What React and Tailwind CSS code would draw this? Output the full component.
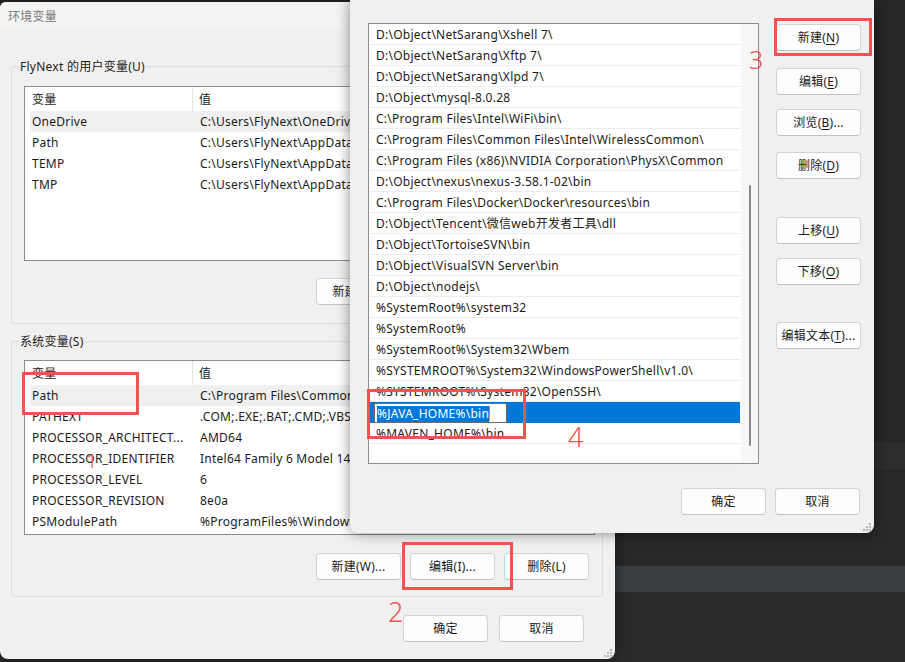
const userVars = [
  ['OneDrive', 'C:\\Users\\FlyNext\\OneDrive', true],
  ['Path', 'C:\\Users\\FlyNext\\AppData\\Local\\Microsoft\\WindowsApps;'],
  ['TEMP', 'C:\\Users\\FlyNext\\AppData\\Local\\Temp'],
  ['TMP', 'C:\\Users\\FlyNext\\AppData\\Local\\Temp'],
];

const sysVars = [
  ['Path', 'C:\\Program Files\\Common Files\\Oracle\\Java\\javapath;', true],
  ['PATHEXT', '.COM;.EXE;.BAT;.CMD;.VBS;.VBE;.JS;.JSE;.WSF;.WSH;.MSC'],
  ['PROCESSOR_ARCHITECT...', 'AMD64'],
  ['PROCESSOR_IDENTIFIER', 'Intel64 Family 6 Model 140 Stepping 1, GenuineIntel'],
  ['PROCESSOR_LEVEL', '6'],
  ['PROCESSOR_REVISION', '8e0a'],
  ['PSModulePath', '%ProgramFiles%\\WindowsPowerShell\\Modules;'],
];

const paths = [
  'D:\\Object\\NetSarang\\Xshell 7\\',
  'D:\\Object\\NetSarang\\Xftp 7\\',
  'D:\\Object\\NetSarang\\Xlpd 7\\',
  'D:\\Object\\mysql-8.0.28',
  'C:\\Program Files\\Intel\\WiFi\\bin\\',
  'C:\\Program Files\\Common Files\\Intel\\WirelessCommon\\',
  'C:\\Program Files (x86)\\NVIDIA Corporation\\PhysX\\Common',
  'D:\\Object\\nexus\\nexus-3.58.1-02\\bin',
  'C:\\Program Files\\Docker\\Docker\\resources\\bin',
  'D:\\Object\\Tencent\\微信web开发者工具\\dll',
  'D:\\Object\\TortoiseSVN\\bin',
  'D:\\Object\\VisualSVN Server\\bin',
  'D:\\Object\\nodejs\\',
  '%SystemRoot%\\system32',
  '%SystemRoot%',
  '%SystemRoot%\\System32\\Wbem',
  '%SYSTEMROOT%\\System32\\WindowsPowerShell\\v1.0\\',
  '%SYSTEMROOT%\\System32\\OpenSSH\\',
  'EDIT',
  '%MAVEN_HOME%\\bin',
  '',
];

function Btn({ children, className = '' }) {
  return (
    <div
      className={`flex h-[27px] w-[85px] shrink-0 items-center justify-center rounded-[4px] border border-[#d3d3d3] border-b-[#c2c2c2] bg-[#fdfdfd] text-[12px] text-[#1b1b1b] ${className}`}
    >
      {children}
    </div>
  );
}

function Grip() {
  return (
    <svg width="8" height="8" viewBox="0 0 8 8" className="absolute bottom-[2px] right-[3px]">
      {[[6, 0], [6, 3], [3, 3], [6, 6], [3, 6], [0, 6]].map(([x, y]) => (
        <rect key={`${x}-${y}`} x={x} y={y} width="2" height="2" fill="#b5b5b5" />
      ))}
    </svg>
  );
}

function VarList({ items, mt }) {
  return (
    <div className={`ml-[12px] h-[175px] w-[571px] overflow-hidden border border-[#8c8c8c] bg-white ${mt}`}>
      <div className="flex h-[24px] items-center">
        <div className="flex h-full w-[168px] items-center border-r border-[#e5e5e5] pl-[7px] pt-[1px]">变量</div>
        <div className="pl-[6px] pt-[1px]">值</div>
      </div>
      {items.map(([name, value, sel]) => (
        <div
          key={name}
          className={`ml-[5px] flex h-[21px] items-center whitespace-nowrap pt-[1px] ${sel ? 'bg-[#f0f0f0]' : ''}`}
        >
          <div className="w-[163px] shrink-0 pl-[2px]">{name}</div>
          <div className="pl-[7px]">{value}</div>
        </div>
      ))}
    </div>
  );
}

function LeftWindow() {
  return (
    <div className="absolute left-0 top-[2px] flex h-[657px] w-[615px] flex-col rounded-b-[8px] rounded-tl-[6px] bg-[#f0f0f0] text-[12px] text-[#1b1b1b] shadow-[0_0_14px_rgba(0,0,0,0.45)]">
      <div className="flex h-[28px] items-center rounded-tl-[6px] bg-[#f3f3f3] pl-[8px] pt-[2px] text-[#7a7a7a]">环境变量</div>

      <fieldset className="ml-[11px] mt-[28px] w-[592px] rounded-[3px] border border-[#dcdcdc] p-0 pb-[18px]">
        <legend className="ml-[7px] px-[1px] leading-[17px]">FlyNext 的用户变量(U)</legend>
        <VarList items={userVars} mt="mt-[11px]" />
        <div className="mt-[17px] flex justify-end gap-[9px] pr-[13px]">
          <Btn>新建(N)...</Btn>
          <Btn>编辑(E)...</Btn>
          <Btn>删除(D)</Btn>
        </div>
      </fieldset>

      <fieldset className="ml-[11px] mt-[9px] w-[592px] rounded-[3px] border border-[#dcdcdc] p-0 pb-[16px]">
        <legend className="ml-[7px] px-[1px] leading-[17px]">系统变量(S)</legend>
        <VarList items={sysVars} mt="mt-[10px]" />
        <div className="mt-[18px] flex justify-end gap-[9px] pr-[13px]">
          <Btn>新建(W)...</Btn>
          <Btn>编辑(I)...</Btn>
          <Btn>删除(L)</Btn>
        </div>
      </fieldset>

      <div className="mt-[18px] flex justify-end gap-[11px] pr-[31px]">
        <Btn>确定</Btn>
        <Btn>取消</Btn>
      </div>
      <Grip />
    </div>
  );
}

function PathList() {
  return (
    <div className="flex h-[441px] w-[391px] border border-[#8c8c8c] bg-white">
      <div className="ml-[1px] w-[371px]">
        {paths.map((p, i) =>
          p === 'EDIT' ? (
            <div key={i} className="flex h-[21px] items-start bg-[#0078d7] pl-[4px] pt-[1px]">
              <div className="flex h-[20px] w-[133px] items-center border border-[#6b6b6b] bg-white pl-[2px] pt-[1px]">
                <span className="bg-[#0078d7] leading-[16px] text-white">%JAVA_HOME%\bin</span>
                <span className="h-[15px] w-[1px] bg-[#e08a00]" />
              </div>
            </div>
          ) : (
            <div key={i} className="flex h-[21px] items-center whitespace-nowrap border-b border-[#ececec] pl-[6px] pt-[2px]">
              {p}
            </div>
          )
        )}
      </div>
      <div className="ml-[1px] flex w-[17px] justify-center bg-[#f7f7f7] pt-[161px]">
        <div className="h-[261px] w-[2px] rounded-full bg-[#8a8a8a]" />
      </div>
    </div>
  );
}

function u(ch) {
  return <span className="underline underline-offset-[2px]">{ch}</span>;
}

function EditDialog() {
  return (
    <div className="absolute left-[350px] top-0 flex h-[533px] w-[524px] flex-col rounded-b-[8px] bg-[#f0f0f0] text-[12px] text-[#1b1b1b] shadow-[0_0_14px_rgba(0,0,0,0.45)]">
      <div className="flex pl-[18px] pt-[23px]">
        <PathList />
        <div className="ml-[17px] flex flex-col">
          <Btn className="mt-[1px]">新建({u('N')})</Btn>
          <Btn className="mt-[17px]">编辑({u('E')})</Btn>
          <Btn className="mt-[14px]">浏览({u('B')})...</Btn>
          <Btn className="mt-[16px]">删除({u('D')})</Btn>
          <Btn className="mt-[38px]">上移({u('U')})</Btn>
          <Btn className="mt-[14px]">下移({u('O')})</Btn>
          <Btn className="mt-[37px]">编辑文本({u('T')})...</Btn>
        </div>
      </div>
      <div className="mt-[24px] flex justify-end gap-[9px] pr-[14px]">
        <Btn>确定</Btn>
        <Btn>取消</Btn>
      </div>
      <Grip />
    </div>
  );
}

export default function App() {
  return (
    <div className="relative h-[662px] w-[905px] overflow-hidden bg-[#2a2a2a] font-['Noto_Sans','Noto_Sans_CJK_SC',sans-serif] tracking-[0.25px]">
      <div className="flex h-full flex-col">
        <div className="h-[442px] bg-[#262626]" />
        <div className="h-[28px] bg-[#2d2d2d]" />
        <div className="h-[96px] bg-[#282828]" />
        <div className="h-[26px] bg-[#3a3d3f]" />
        <div className="flex-1 bg-[#2a2a2a]" />
      </div>

      <LeftWindow />
      <EditDialog />

      {/* annotations */}
      <div className="absolute left-[22px] top-[372px] h-[43px] w-[117px] border-[3px] border-[#f25252]" />
      <div className="absolute left-[402px] top-[542px] h-[48px] w-[111px] border-[3px] border-[#f25252]" />
      <div className="absolute left-[774px] top-[18px] h-[38px] w-[98px] border-[3px] border-[#f25252]" />
      <div className="absolute left-[367px] top-[389px] h-[50px] w-[159px] border-[3px] border-[#f25252]" />
      <div className="absolute left-[86px] top-[449px] text-[20px] font-light leading-[24px] text-[#f25252]">1</div>
      <div className="absolute left-[388px] top-[597px] text-[27px] font-light leading-[30px] text-[#f25252]">2</div>
      <div className="absolute left-[749px] top-[45px] text-[25px] font-light leading-[28px] text-[#f25252]">3</div>
      <div className="absolute left-[568px] top-[422px] text-[27px] font-light leading-[30px] text-[#f25252]">4</div>
    </div>
  );
}
